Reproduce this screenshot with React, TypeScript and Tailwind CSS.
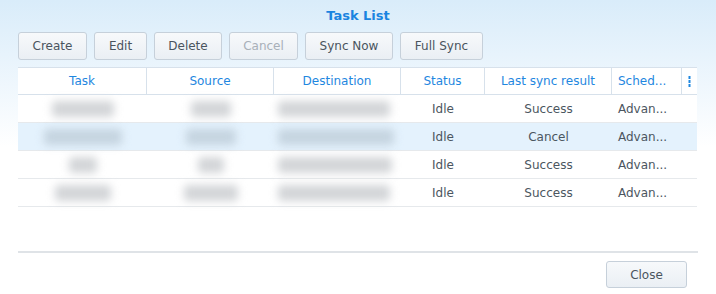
import React from "react";

const font = { fontFamily: '"DejaVu Sans", Verdana, sans-serif' };

const buttons = [
  { label: "Create", w: "w-[69px]" },
  { label: "Edit", w: "w-[53px]" },
  { label: "Delete", w: "w-[68px]" },
  { label: "Cancel", w: "w-[69px]", disabled: true },
  { label: "Sync Now", w: "w-[88px]" },
  { label: "Full Sync", w: "w-[83px]" },
];

const rows = [
  { result: "Success", task: "w-[62px]", src: "w-[40px]", dst: "w-[112px]" },
  { result: "Cancel", task: "w-[78px]", src: "w-[50px]", dst: "w-[116px]", selected: true },
  { result: "Success", task: "w-[28px]", src: "w-[26px]", dst: "w-[114px]" },
  { result: "Success", task: "w-[56px]", src: "w-[54px]", dst: "w-[112px]" },
];

function ToolButton({ label, w, disabled }: { label: string; w: string; disabled?: boolean }) {
  return (
    <button
      className={`h-[28px] ${w} rounded-[3px] border border-[#c6d0da] bg-gradient-to-b from-[#f7f9fb] to-[#eaeff4] text-[12px] ${
        disabled ? "text-[#a8b0b8]" : "text-[#4a545e]"
      }`}
    >
      {label}
    </button>
  );
}

function Blur({ w, sel }: { w: string; sel?: boolean }) {
  return (
    <div
      className={`h-[16px] ${w} rounded-sm blur-[4px] ${sel ? "bg-[#c5d4e0]" : "bg-[#d3d5d8]"}`}
    />
  );
}

export default function App() {
  return (
    <div
      className="w-[716px] h-[294px] bg-gradient-to-b from-[#d9ecfa] via-white to-white bg-no-repeat flex flex-col"
      style={font}
    >
      <div className="h-[32px] flex items-center justify-center text-[13px] font-bold text-[#1a84e0]">
        Task List
      </div>
      <div className="flex gap-[7px] px-[18px]">
        {buttons.map((b) => (
          <ToolButton key={b.label} {...b} />
        ))}
      </div>
      <div className="mx-[18px] mt-[7px] w-[679px]">
        <div className="flex h-[28px] border-t border-b border-[#d7e1eb] text-[12px] text-[#1f87e0] bg-white">
          <div className="w-[129px] flex items-center justify-center border-r border-[#d7e1eb]">Task</div>
          <div className="w-[127px] flex items-center justify-center border-r border-[#d7e1eb]">Source</div>
          <div className="w-[127px] flex items-center justify-center border-r border-[#d7e1eb]">Destination</div>
          <div className="w-[84px] flex items-center justify-center border-r border-[#d7e1eb]">Status</div>
          <div className="w-[127px] flex items-center justify-center border-r border-[#d7e1eb]">Last sync result</div>
          <div className="w-[70px] flex items-center pl-[6px] border-r border-[#d7e1eb]">Sched...</div>
          <div className="flex-1 flex items-center justify-center">
            <svg width="3" height="11" viewBox="0 0 3 11">
              <rect x="0.5" y="0" width="2" height="3" fill="#1f87e0" />
              <rect x="0.5" y="4" width="2" height="3" fill="#1f87e0" />
              <rect x="0.5" y="8" width="2" height="3" fill="#1f87e0" />
            </svg>
          </div>
        </div>
        {rows.map((r, i) => (
          <div
            key={i}
            className={`flex h-[28px] border-b border-[#e6e9ec] text-[12px] text-[#4b5660] ${
              r.selected ? "bg-[#e4f2fd]" : "bg-white"
            }`}
          >
            <div className="w-[129px] flex items-center justify-center">
              <Blur w={r.task} sel={r.selected} />
            </div>
            <div className="w-[127px] flex items-center justify-center">
              <Blur w={r.src} sel={r.selected} />
            </div>
            <div className="w-[127px] flex items-center pl-[4px]">
              <Blur w={r.dst} sel={r.selected} />
            </div>
            <div className="w-[84px] flex items-center justify-center">Idle</div>
            <div className="w-[127px] flex items-center justify-center">{r.result}</div>
            <div className="w-[70px] flex items-center pl-[6px]">Advan...</div>
            <div className="flex-1" />
          </div>
        ))}
      </div>
      <div className="flex-1" />
      <div className="mx-[18px] w-[680px] h-[2px] bg-[#dfe3e7]" />
      <div className="flex justify-end pr-[29px] pt-[8px] pb-[6px]">
        <button className="h-[27px] w-[81px] rounded-[3px] border border-[#c6d0da] bg-gradient-to-b from-[#f7f9fb] to-[#eaeff4] text-[12px] text-[#4a545e]">
          Close
        </button>
      </div>
    </div>
  );
}
